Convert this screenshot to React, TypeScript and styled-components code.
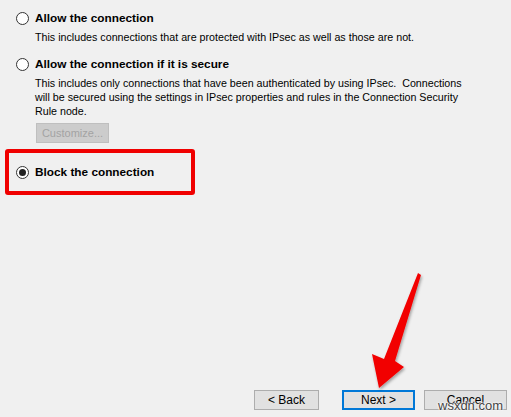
import React from "react";
import styled, { createGlobalStyle } from "styled-components";

const Global = createGlobalStyle`
  html, body { margin: 0; padding: 0; background: #f0f0f0; }
  body { font-family: "Liberation Sans", Arial, sans-serif; }
`;

const Page = styled.div`
  position: relative;
  width: 511px;
  height: 417px;
  background: #f0f0f0;
  display: flex;
  flex-direction: column;
  overflow: hidden;
  color: #000;
`;

const Options = styled.div`
  display: flex;
  flex-direction: column;
  padding: 11px 0 0 16px;
`;

const Option = styled.div<{ $gap?: number }>`
  display: flex;
  flex-direction: column;
  margin-bottom: ${(p) => p.$gap ?? 0}px;
`;

const RadioRow = styled.div`
  display: flex;
  align-items: center;
  gap: 6px;
  height: 14px;
`;

const Radio = styled.span<{ $checked?: boolean }>`
  width: 13px;
  height: 13px;
  box-sizing: border-box;
  border: 1px solid #333;
  border-radius: 50%;
  background: #fff;
  display: flex;
  align-items: center;
  justify-content: center;
  flex: none;
  &::after {
    content: "";
    display: ${(p) => (p.$checked ? "block" : "none")};
    width: 7px;
    height: 7px;
    border-radius: 50%;
    background: #222;
  }
`;

const Label = styled.span`
  font-weight: bold;
  font-size: 11.8px;
  line-height: 14px;
  white-space: nowrap;
`;

const Desc = styled.div`
  font-size: 10.7px;
  line-height: 14px;
  padding-left: 19px;
  margin-top: 5px;
  color: #000;
  white-space: pre;
`;

const CustomizeButton = styled.button`
  margin: 5px 0 0 20px;
  width: 73px;
  height: 20px;
  box-sizing: border-box;
  background: #cccccc;
  border: 1px solid #bfbfbf;
  color: #a3a3a3;
  font-family: "Liberation Sans", Arial, sans-serif;
  font-size: 11px;
  padding: 0;
  text-align: center;
`;

const Highlight = styled.div`
  margin: 6px 0 0 5px;
  width: 190px;
  height: 46px;
  box-sizing: border-box;
  border: 4px solid #f00000;
  border-radius: 3px;
  display: flex;
  align-items: center;
  padding-left: 7px;
`;

const Footer = styled.div`
  margin-top: auto;
  display: flex;
  justify-content: flex-end;
  padding: 0 4px 7px 0;
`;

const Button = styled.button<{ $w: number; $ml: number; $primary?: boolean }>`
  width: ${(p) => p.$w}px;
  height: 20px;
  margin-left: ${(p) => p.$ml}px;
  box-sizing: border-box;
  background: #e1e1e1;
  border: ${(p) => (p.$primary ? "2px solid #0078d7" : "1px solid #adadad")};
  font-family: "Liberation Sans", Arial, sans-serif;
  font-size: 12px;
  color: #000;
  padding: 0;
  position: relative;
`;

const Watermark = styled.span`
  position: absolute;
  left: 13px;
  top: 7px;
  font-size: 13px;
  color: #444;
  text-shadow: 0 0 2px #fff, 0 0 2px #fff, 0 0 2px #fff;
  white-space: nowrap;
  pointer-events: none;
`;

const ArrowSvg = styled.svg`
  position: absolute;
  left: 0;
  top: 0;
  pointer-events: none;
`;

export default function App() {
  return (
    <>
      <Global />
      <Page>
        <Options>
          <Option $gap={13}>
            <RadioRow>
              <Radio />
              <Label>Allow the connection</Label>
            </RadioRow>
            <Desc>This includes connections that are protected with IPsec as well as those are not.</Desc>
          </Option>
          <Option>
            <RadioRow>
              <Radio />
              <Label>Allow the connection if it is secure</Label>
            </RadioRow>
            <Desc>
              {"This includes only connections that have been authenticated by using IPsec.  Connections\nwill be secured using the settings in IPsec properties and rules in the Connection Security\nRule node."}
            </Desc>
          </Option>
          <CustomizeButton disabled>Customize...</CustomizeButton>
        </Options>
        <Highlight>
          <RadioRow>
            <Radio $checked />
            <Label>Block the connection</Label>
          </RadioRow>
        </Highlight>
        <Footer>
          <Button $w={65} $ml={0}>&lt; Back</Button>
          <Button $w={73} $ml={23} $primary>Next &gt;</Button>
          <Button $w={83} $ml={9}>
            Cancel
            <Watermark>wsxdn.com</Watermark>
          </Button>
        </Footer>
        <ArrowSvg width="511" height="417" viewBox="0 0 511 417">
          <defs>
            <filter id="sh" x="-50%" y="-50%" width="200%" height="200%">
              <feDropShadow dx="1" dy="2" stdDeviation="1.5" floodColor="#000" floodOpacity="0.35" />
            </filter>
          </defs>
          <polygon
            points="418,273 421,275 395,361 404,367 379,388 372,354 384,359"
            fill="#f20000"
            filter="url(#sh)"
          />
        </ArrowSvg>
      </Page>
    </>
  );
}
